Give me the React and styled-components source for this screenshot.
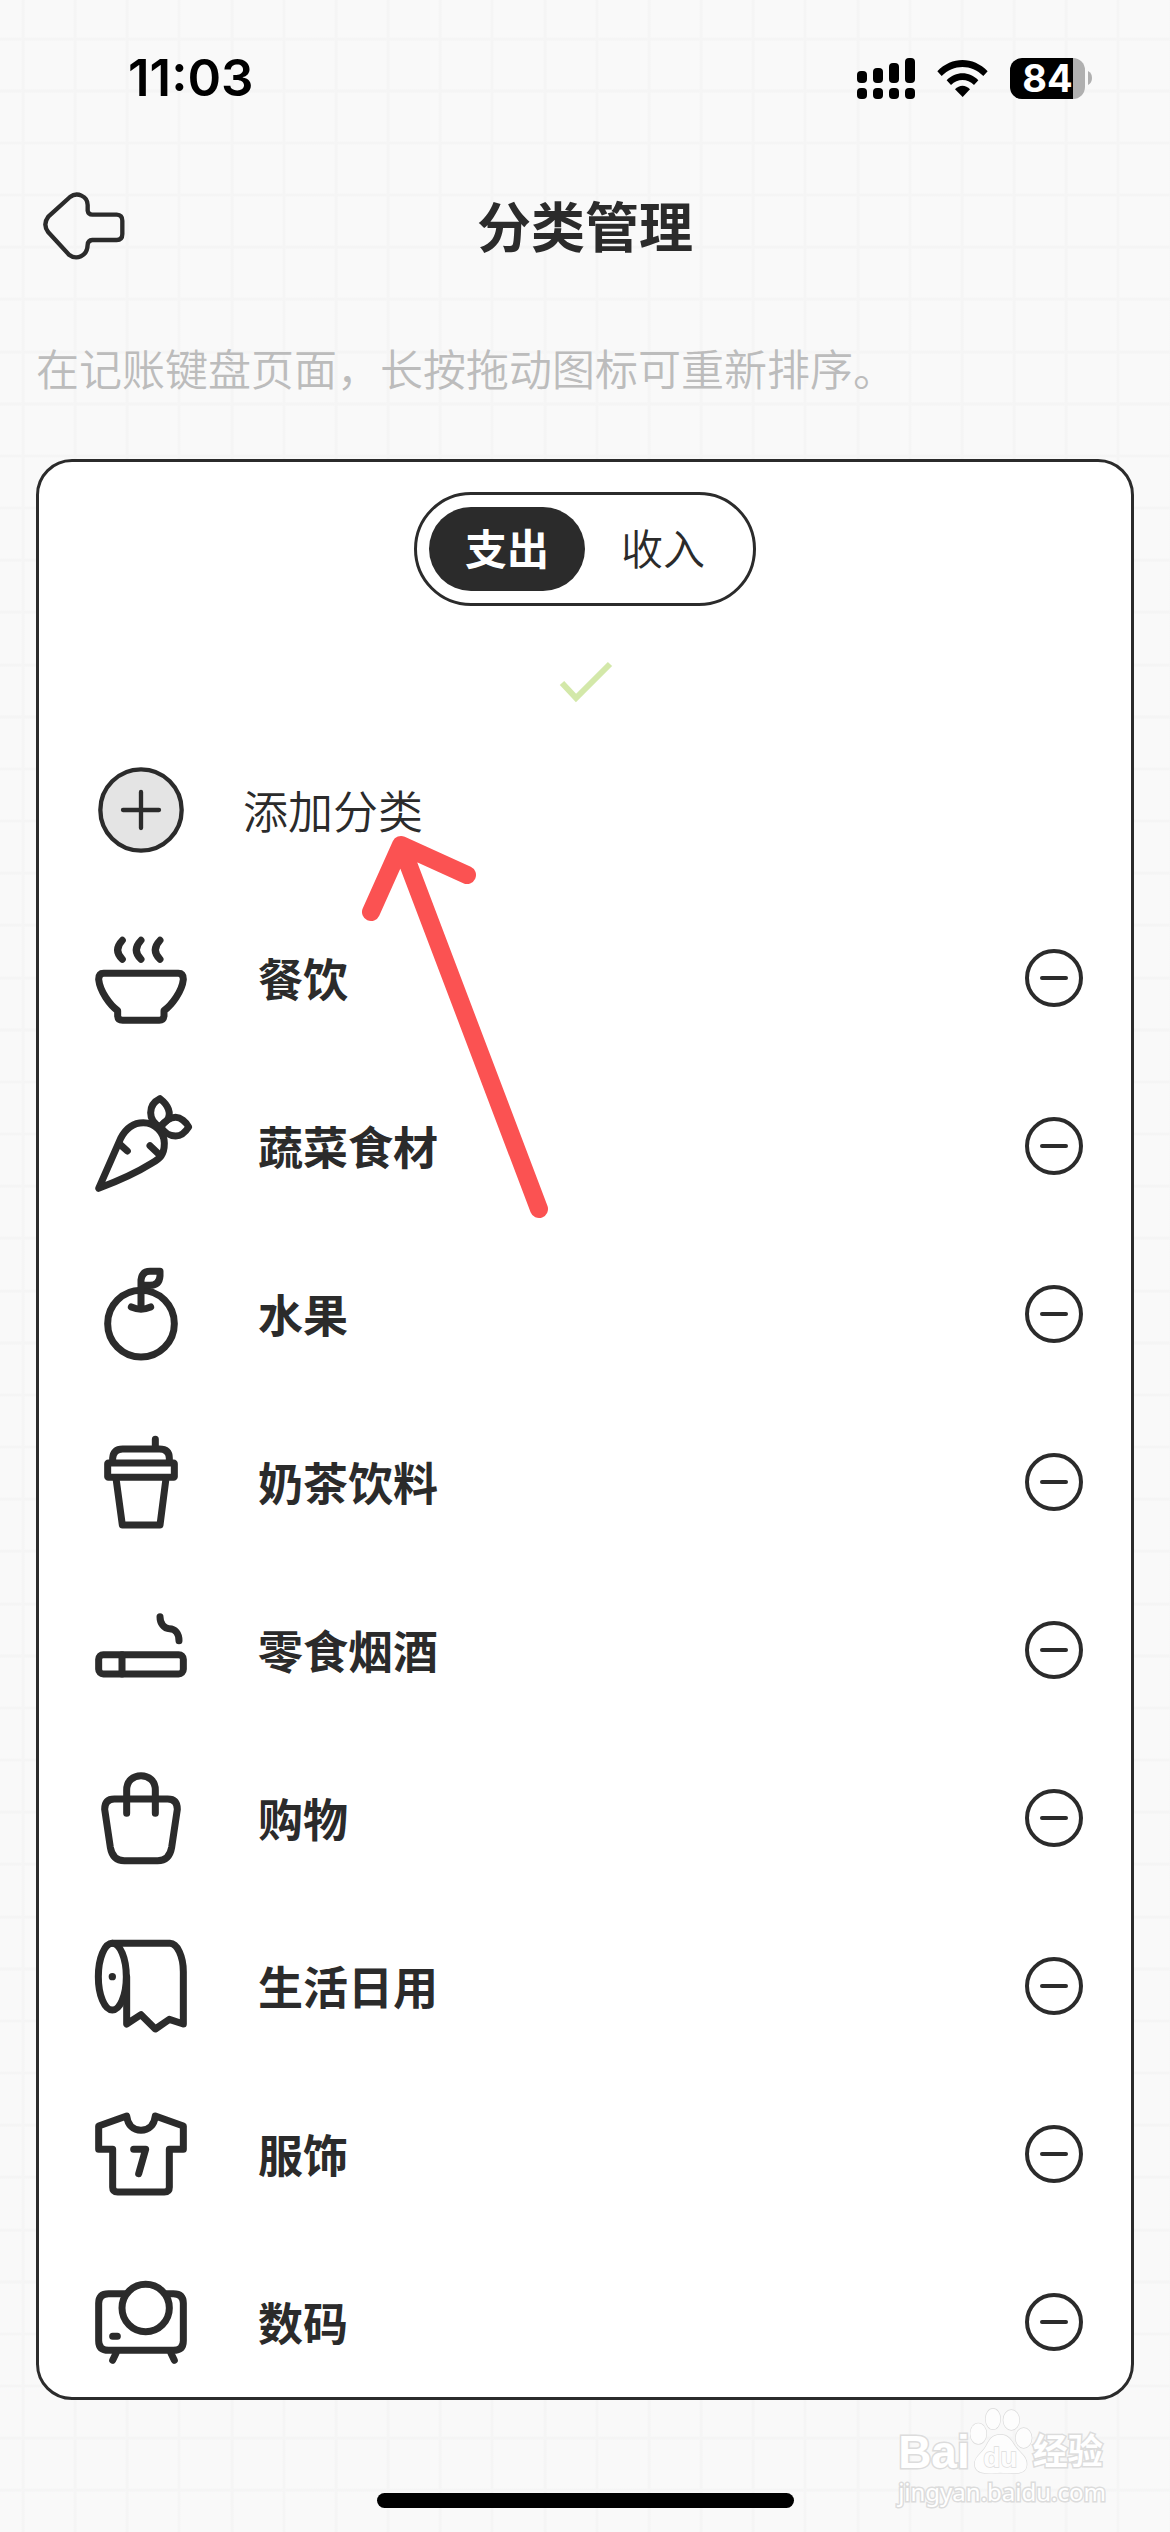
import React, { useState } from "react";
import styled, { createGlobalStyle } from "styled-components";

const INK = "#2b2b2b";

/* One tile of the paper grid holds six cells on each axis. */
const gridLine = (at) =>
  `transparent ${at - 2}px, #f5f5f5 ${at - 1}px, #f5f5f5 ${at + 1}px, transparent ${at + 2}px`;
const gridColumns = [23, 75, 127, 179, 232, 284].map(gridLine).join(", ");
const gridRows = [39, 91, 143, 195, 247, 299].map(gridLine).join(", ");

const GlobalStyle = createGlobalStyle`
  *, *::before, *::after { box-sizing: border-box; }
  body {
    margin: 0;
    background-color: #f9f9f9;
    background-image:
      linear-gradient(to right, ${gridColumns}),
      linear-gradient(to bottom, ${gridRows});
    background-size: 313px 313px;
    color: ${INK};
    font-family: Inter, "Noto Sans CJK SC", sans-serif;
  }
  button { font: inherit; color: inherit; border: 0; padding: 0; background: none; cursor: pointer; }
`;

const Page = styled.div`
  position: relative;
  display: flex;
  flex-direction: column;
  min-height: 100vh;
`;

const StatusBar = styled.div`
  display: flex;
  align-items: center;
  justify-content: space-between;
  height: 156px;
  padding: 0 78px 0 128px;
  color: #000;
`;

const Clock = styled.time`
  font-size: 51px;
  font-weight: 600;
  line-height: 60px;
`;

const StatusIcons = styled.div`
  display: flex;
  align-items: center;
  gap: 22px;
`;

const Battery = styled.div`
  display: flex;
  align-items: center;
  gap: 3px;
`;

const BatteryBody = styled.div`
  display: flex;
  align-items: center;
  justify-content: center;
  width: 75px;
  height: 41px;
  border-radius: 12px;
  background: linear-gradient(to right, #000 63px, #b0b0b0 63px);
  color: #fff;
  font-size: 38px;
  font-weight: 700;
  line-height: 41px;
`;

const Header = styled.header`
  display: grid;
  grid-template-columns: 1fr auto 1fr;
  align-items: center;
  height: 140px;
  padding: 0 36px;
`;

const BackButton = styled.button`
  display: flex;
  width: 96px;
  height: 96px;
  align-items: center;
`;

const Title = styled.h1`
  margin: 0;
  padding-top: 6px;
  font-size: 54px;
  font-weight: 600;
  line-height: 72px;
`;

const Hint = styled.p`
  margin: 0;
  padding: 44px 36px 59px;
  color: #bcbcbc;
  font-size: 43px;
  font-weight: 350;
  line-height: 60px;
`;

const Card = styled.main`
  position: relative;
  display: flex;
  flex-direction: column;
  align-items: center;
  margin: 0 36px;
  padding: 30px 0 27px;
  border: 3px solid ${INK};
  border-radius: 36px;
  background: #fff;
`;

const Toggle = styled.div`
  display: flex;
  padding: 12px;
  border: 3px solid ${INK};
  border-radius: 57px;
`;

const ToggleOption = styled.button`
  && {
    height: 84px;
    padding: 2px 36px 0;
    border-radius: 42px;
    background: ${(p) => (p.$active ? INK : "transparent")};
    color: ${(p) => (p.$active ? "#fff" : INK)};
    font-size: 42px;
    font-weight: ${(p) => (p.$active ? 600 : 350)};
    line-height: 60px;
  }
`;

const SavedMark = styled.svg`
  width: 60px;
  height: 60px;
  margin: 46px 0 50px;
`;

const List = styled.ul`
  display: flex;
  flex-direction: column;
  gap: 72px;
  width: 100%;
  margin: 0;
  padding: 0 48px 0 54px;
  list-style: none;
`;

const Row = styled.li`
  display: flex;
  align-items: center;
  gap: 69px;
  height: 96px;
`;

const AddButton = styled.button`
  display: flex;
  align-items: center;
  gap: 54px;
  height: 96px;
`;

const RowIcon = styled.svg`
  flex: none;
  width: 96px;
  height: 96px;
  overflow: visible;
  fill: none;
  stroke: ${INK};
  stroke-width: ${(p) => p.$weight || 21};
  stroke-linecap: round;
  stroke-linejoin: round;
`;

const Label = styled.span`
  flex: 1;
  padding-top: 6px;
  font-size: 45px;
  font-weight: ${(p) => (p.$light ? 350 : 600)};
  line-height: 60px;
`;

const RemoveButton = styled.button`
  display: flex;
  align-items: center;
  justify-content: center;
  width: 58px;
  height: 58px;
`;

const Pointer = styled.svg`
  position: absolute;
  left: 312px;
  top: 363px;
  width: 210px;
  height: 400px;
  pointer-events: none;
`;

const Footer = styled.footer`
  display: flex;
  justify-content: center;
  padding: 93px 0 24px;
`;

const HomeIndicator = styled.div`
  width: 417px;
  height: 15px;
  border-radius: 8px;
  background: #000;
`;

const Watermark = styled.div`
  position: absolute;
  right: 64px;
  bottom: 24px;
  display: flex;
  flex-direction: column;
  color: #fff;
  -webkit-text-stroke: 3px #dcdcdc;
  paint-order: stroke fill;
  pointer-events: none;
`;

const WatermarkLogo = styled.div`
  display: flex;
  align-items: flex-end;
  height: 70px;
  font-family: "Liberation Sans", "Noto Sans CJK SC", sans-serif;
  font-size: 46px;
  font-weight: 700;
  line-height: 46px;
`;

const WatermarkName = styled.span`
  font-size: 35px;
`;

const WatermarkSite = styled.span`
  font-family: "Noto Sans", sans-serif;
  font-size: 24px;
  line-height: 33px;
`;

const categories = [
  {
    name: "餐饮",
    art: (
      <g transform="translate(-99 -600)">
        <path d="M187 631Q159 660 187 688M243 631Q215 660 243 688M300 631Q272 660 300 688" />
        <path d="M131 730H355Q370 730 370 748C366 785 335 825 312 842V858Q310 871 298 871H188Q174 871 173 858V842C150 825 120 785 116 748Q116 730 131 730Z" />
      </g>
    ),
  },
  {
    name: "蔬菜食材",
    art: (
      <g transform="translate(-99 -1104)">
        <path d="M116 1375L182 1225C200 1190 222 1178 250 1178C285 1178 313 1208 313 1240C313 1275 300 1285 275 1300C235 1325 175 1353 116 1375Z" />
        <path d="M180 1243L202 1263M270 1247L300 1276" />
        <path d="M300 1106C325 1125 335 1150 322 1170L300 1190C280 1180 272 1165 272 1148C272 1130 282 1115 300 1106Z" />
        <path d="M302 1190C320 1167 335 1162 347 1162C362 1162 378 1175 386 1191C376 1207 362 1218 347 1218C330 1218 312 1208 302 1190Z" />
      </g>
    ),
  },
  {
    name: "水果",
    art: (
      <g transform="translate(-99 -108)">
        <circle cx="243" cy="281" r="100" />
        <path d="M243 235V150Q246 124 270 124H300V138Q298 166 270 166H250" />
        <path d="M214 231Q243 244 272 231" />
      </g>
    ),
  },
  {
    name: "奶茶饮料",
    art: (
      <g transform="translate(-99 -612)">
        <path d="M286 628V655M158 695V685Q160 657 188 657H298Q328 657 328 685V695" />
        <rect x="143" y="699" width="200" height="43" rx="2" />
        <path d="M168 745L187 885H300L318 745" />
      </g>
    ),
  },
  {
    name: "零食烟酒",
    art: (
      <g transform="translate(-99 -1116)">
        <path d="M300 1160C300 1180 312 1196 328 1196C345 1196 357 1210 357 1232" />
        <rect x="116" y="1274" width="254" height="58" rx="14" />
        <path d="M186 1274V1332" />
      </g>
    ),
  },
  {
    name: "购物",
    art: (
      <g transform="translate(-99 -120)">
        <path d="M163 207H323Q352 207 352 238L335 352Q328 392 293 392H193Q158 392 151 352L134 238Q134 207 163 207Z" />
        <path d="M200 250V180C200 152 220 137 243 137S286 152 286 180V250" />
      </g>
    ),
  },
  {
    name: "生活日用",
    art: (
      <g transform="translate(-99 -624)">
        <ellipse cx="157" cy="740" rx="42" ry="100" />
        <circle cx="157" cy="740" r="11" fill={INK} stroke="none" />
        <path d="M157 640H330C352 640 370 680 370 725V882L328 868L286 897L243 854L200 882V740" />
      </g>
    ),
  },
  {
    name: "服饰",
    art: (
      <g transform="translate(-99 -108)">
        <path d="M116 168L200 138C203 165 220 181 243 181C266 181 283 165 286 138L370 168V238H328V352Q328 366 313 366H173Q158 366 158 352V238H116Z" />
        <path d="M221 238H257L236 311" />
      </g>
    ),
  },
  {
    name: "数码",
    art: (
      <g transform="translate(-99 -612)">
        <path d="M197 671H146Q116 671 116 700V812Q116 841 146 841H340Q370 841 370 812V700Q370 671 340 671H318" />
        <circle cx="257" cy="714" r="71" />
        <path d="M158 799H172M168 850L158 871M333 850L343 871" />
      </g>
    ),
  },
];

const SignalIcon = () => (
  <svg width="58" height="41" viewBox="0 0 58 41" aria-hidden="true">
    {[13, 10, 5, 0].map((top, i) => (
      <React.Fragment key={top}>
        <rect x={i * 16} y={top} width="10" height={25 - top} rx="4" />
        <rect x={i * 16} y="30" width="10" height="11" rx="4" />
      </React.Fragment>
    ))}
  </svg>
);

const WifiIcon = () => (
  <svg width="51" height="37" viewBox="0 0 153 111" aria-hidden="true">
    <path d="M1 34C44-11 109-11 152 34L139 48C103 12 50 12 14 48Z" />
    <path d="M29 61C56 33 97 33 124 61L111 75C91 55 62 55 42 75Z" />
    <path d="M54 88C67 74 86 74 99 88L77 111Z" />
  </svg>
);

const BackIcon = () => (
  <svg width="96" height="72" viewBox="108 90 288 216" fill="none" stroke={INK} strokeWidth="13" strokeLinejoin="round" aria-hidden="true">
    <path d="M210 111C231 95 263 108 263 135V152Q265 164 277 164H350Q367 165 367 182V222Q367 240 350 240H277Q264 241 263 254C262 290 229 301 207 284L145 217Q127 194 145 170Z" />
  </svg>
);

const Paw = () => (
  <svg width="63" height="70" viewBox="0 0 189 210" fill="#fdfdfd" stroke="#dcdcdc" strokeWidth="4" aria-hidden="true">
    <ellipse cx="25" cy="86" rx="24" ry="31" />
    <ellipse cx="69" cy="42" rx="22" ry="31" />
    <ellipse cx="124" cy="45" rx="24" ry="30" />
    <ellipse cx="161" cy="99" rx="24" ry="30" />
    <path d="M91 89C116 89 124 106 137 126C150 144 172 155 170 180C168 208 139 207 91 203C44 208 16 206 14 178C14 153 38 144 48 124C57 106 66 89 91 89Z" />
    <text x="91" y="186" textAnchor="middle" fontSize="84" fontWeight="700" fontFamily="Liberation Sans, sans-serif">
      du
    </text>
  </svg>
);

export default function App() {
  const [tab, setTab] = useState("支出");
  return (
    <>
      <GlobalStyle />
      <Page>
        <StatusBar>
          <Clock>11:03</Clock>
          <StatusIcons>
            <SignalIcon />
            <WifiIcon />
            <Battery>
              <BatteryBody>84</BatteryBody>
              <svg width="4" height="14" viewBox="0 0 4 14" fill="#b0b0b0" aria-hidden="true">
                <path d="M0 0Q4 2 4 7T0 14Z" />
              </svg>
            </Battery>
          </StatusIcons>
        </StatusBar>

        <Header>
          <BackButton aria-label="返回">
            <BackIcon />
          </BackButton>
          <Title>分类管理</Title>
        </Header>

        <Hint>在记账键盘页面，长按拖动图标可重新排序。</Hint>

        <Card>
          <Toggle>
            {["支出", "收入"].map((name) => (
              <ToggleOption key={name} $active={tab === name} aria-pressed={tab === name} onClick={() => setTab(name)}>
                {name}
              </ToggleOption>
            ))}
          </Toggle>

          <SavedMark viewBox="0 0 60 60" fill="none" stroke="#d3e8a9" strokeWidth="6" aria-hidden="true">
            <path d="M7 31L21 46L55 12" />
          </SavedMark>

          <List>
            <li>
              <AddButton>
                <RowIcon viewBox="0 0 288 288" $weight={13} aria-hidden="true">
                  <circle cx="144" cy="144" r="122" fill="#e4e4e4" />
                  <path d="M90 144H198M144 90V198" />
                </RowIcon>
                <Label $light>添加分类</Label>
              </AddButton>
            </li>
            {categories.map(({ name, art }) => (
              <Row key={name}>
                <RowIcon viewBox="0 0 288 288" aria-hidden="true">
                  {art}
                </RowIcon>
                <Label>{name}</Label>
                <RemoveButton aria-label={`删除${name}`}>
                  <svg width="58" height="58" viewBox="0 0 58 58" fill="none" stroke={INK} strokeWidth="4" strokeLinecap="round" aria-hidden="true">
                    <circle cx="29" cy="29" r="27" />
                    <path d="M17 29H41" />
                  </svg>
                </RemoveButton>
              </Row>
            ))}
          </List>

          <Pointer viewBox="351 825 210 400" fill="none" stroke="#fb5252" strokeWidth="18" strokeLinecap="round" strokeLinejoin="round" aria-hidden="true">
            <path d="M539 1209L401 845M371 912L401 845L467 875" />
          </Pointer>
        </Card>

        <Footer>
          <HomeIndicator />
        </Footer>

        <Watermark>
          <WatermarkLogo>
            <span>Bai</span>
            <Paw />
            <WatermarkName>经验</WatermarkName>
          </WatermarkLogo>
          <WatermarkSite>jingyan.baidu.com</WatermarkSite>
        </Watermark>
      </Page>
    </>
  );
}
